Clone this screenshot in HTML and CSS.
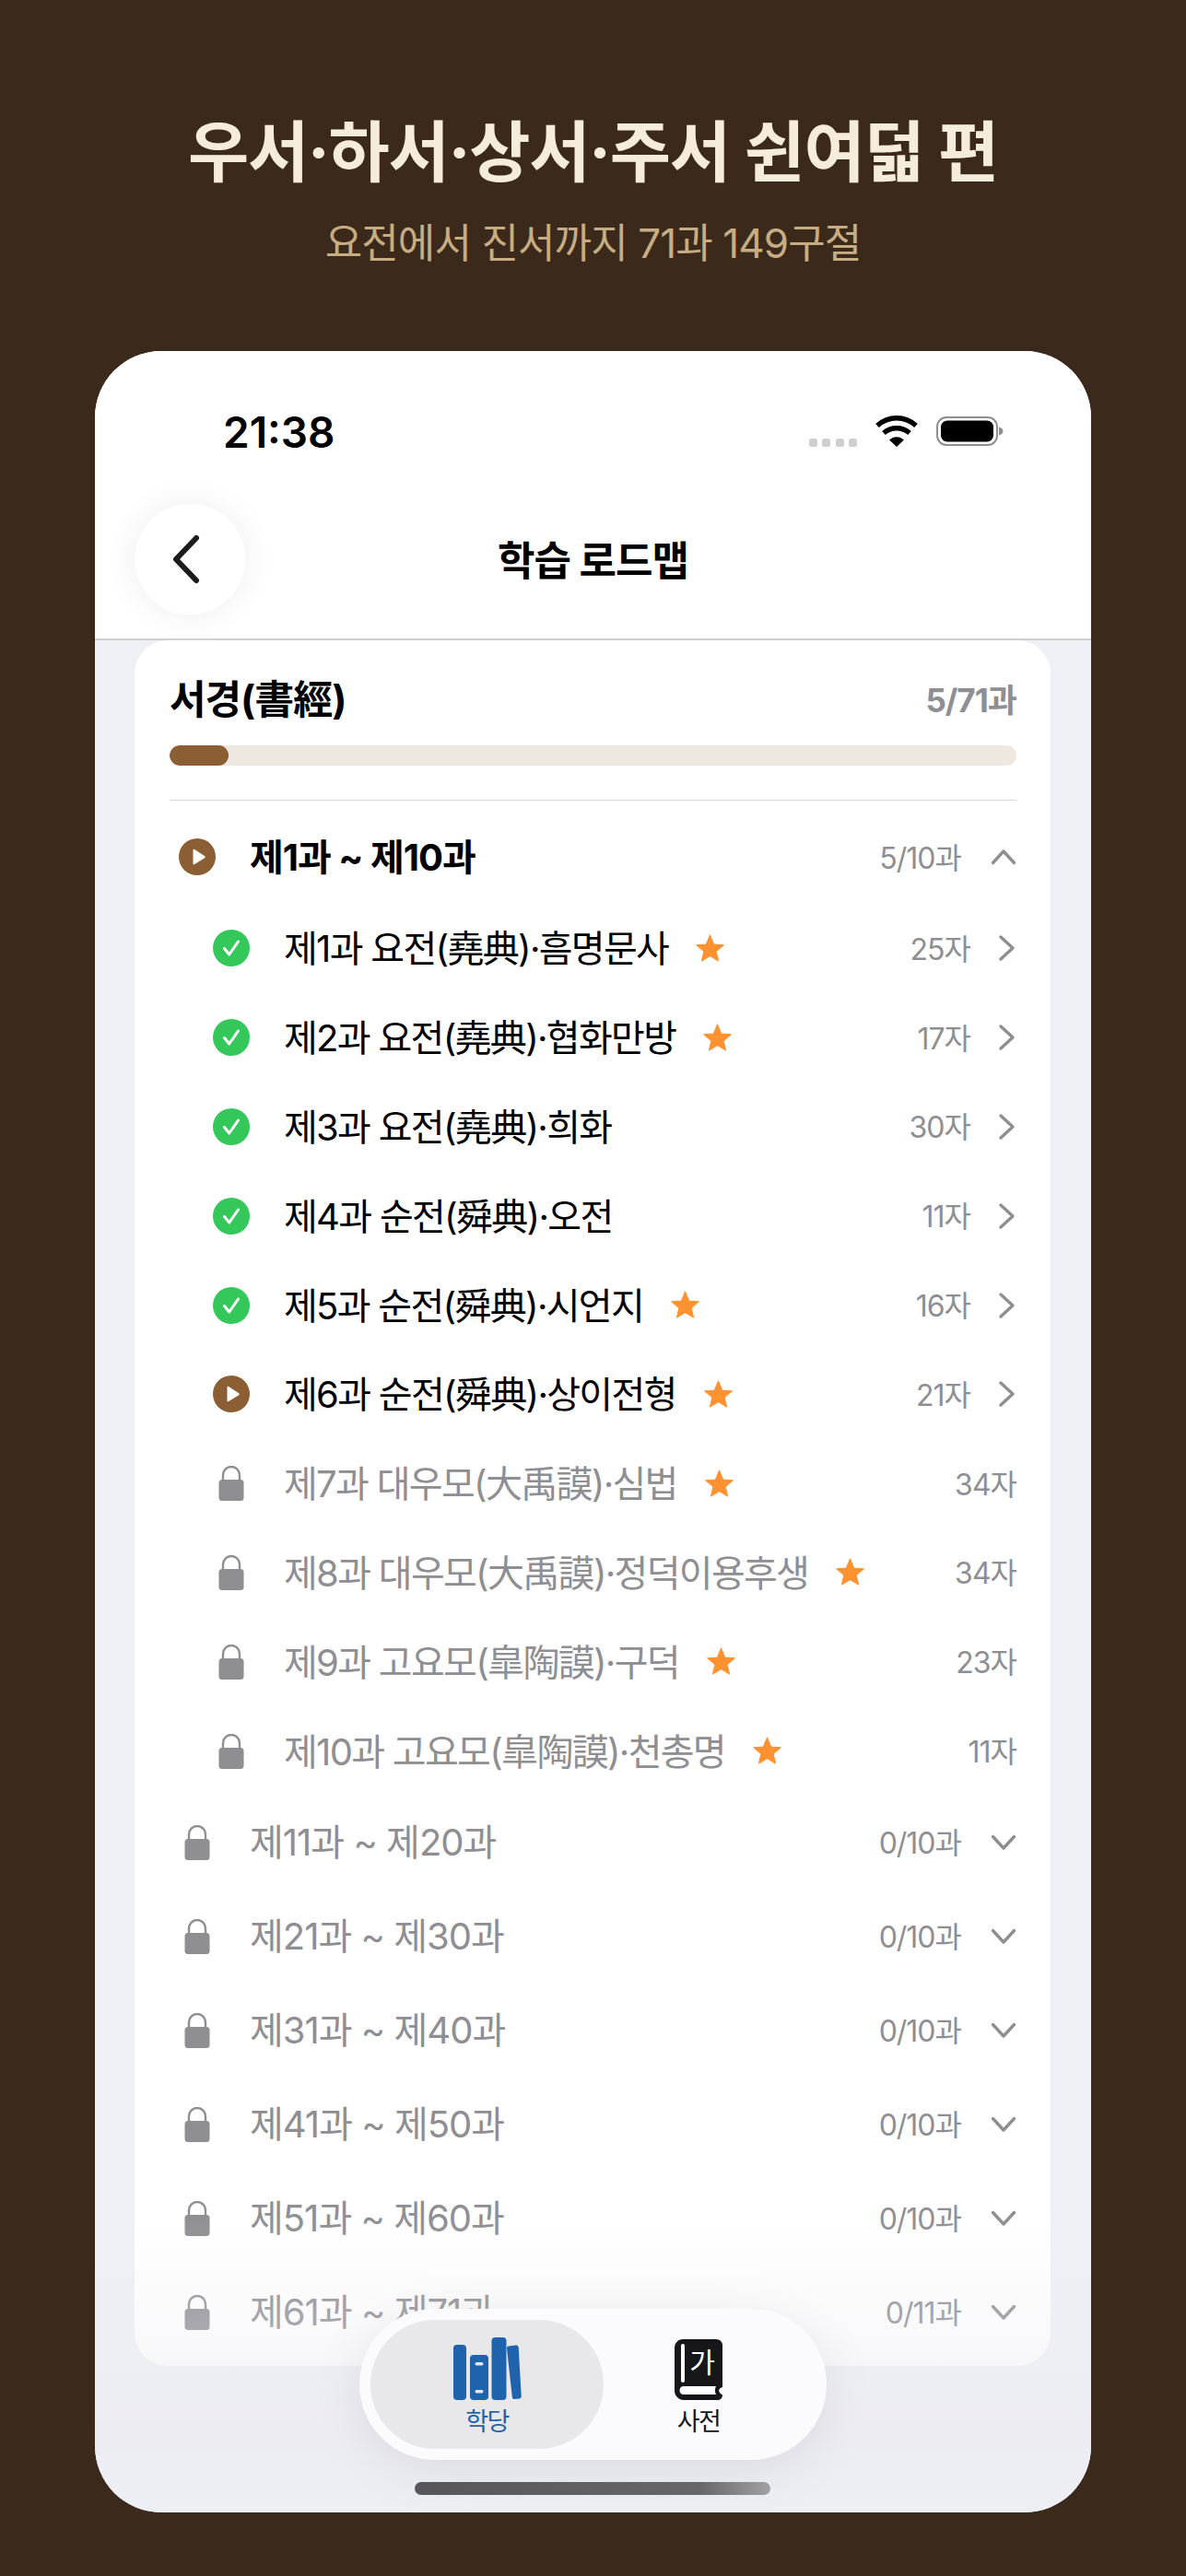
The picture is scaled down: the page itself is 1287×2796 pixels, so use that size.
FILE: index.html

```html
<!DOCTYPE html>
<html lang="ko">
<head>
    <meta charset="UTF-8">
    <meta name="viewport" content="width=device-width, initial-scale=1.0">
    <title>학습 로드맵</title>
    <link rel="stylesheet" href="styles.css">
</head>
<body>
    <!-- Iconos -->
    <svg class="sprite" aria-hidden="true">
        <symbol id="i-check" viewBox="0 0 40 40">
            <circle cx="20" cy="20" r="20" fill="#34C759"/>
            <path d="M12.5 20.5l5.2 6.5L27.5 13" fill="none" stroke="#fff" stroke-width="3" stroke-linecap="round" stroke-linejoin="round"/>
        </symbol>
        <symbol id="i-play" viewBox="0 0 40 40">
            <circle cx="20" cy="20" r="20" fill="#8B5E34"/>
            <path d="M15.5 12.8v14.4c0 .9.9 1.4 1.7.9l11-6.9c.7-.5.7-1.5 0-1.9l-11-7.3c-.8-.5-1.7.1-1.7.8z" fill="#fff"/>
        </symbol>
        <symbol id="i-lock" viewBox="0 0 28 38">
            <path d="M5 17v-7a9 9 0 0 1 18 0v7" fill="none" stroke="#8E8E93" stroke-width="2.400"/>
            <rect x="0.5" y="15" width="27" height="23" rx="3.500" fill="#8E8E93"/>
        </symbol>
        <symbol id="i-star" viewBox="0 0 30 30">
            <path d="M15 1l4 9.6 10.2.8-7.8 6.7 2.4 10L15 22.700l-8.800 5.400 2.400-10-7.800-6.700 10.200-.8z" fill="#FF9230" stroke="#FF9230" stroke-linejoin="round"/>
        </symbol>
        <symbol id="i-right" viewBox="0 0 20 30">
            <path d="M3 3l13 12L3 27" fill="none" stroke="#8E8E93" stroke-width="3.400" stroke-linecap="round" stroke-linejoin="round"/>
        </symbol>
        <symbol id="i-up" viewBox="0 0 28 18">
            <path d="M2.500 15.500L14 3l11.500 12.500" fill="none" stroke="#8E8E93" stroke-width="3.400" stroke-linecap="round" stroke-linejoin="round"/>
        </symbol>
        <symbol id="i-down" viewBox="0 0 28 18">
            <path d="M2.500 2.500L14 15 25.500 2.500" fill="none" stroke="#8E8E93" stroke-width="3.400" stroke-linecap="round" stroke-linejoin="round"/>
        </symbol>
    </svg>

    <!-- Encabezado -->
    <div class="promo">
        <h1>우서·하서·상서·주서 쉰여덟 편</h1>
        <p>요전에서 진서까지 71과 149구절</p>
    </div>

    <div class="phone">
        <div class="status-bar">
            <span class="time">21:38</span>
            <svg class="status-icons" width="212" height="36" viewBox="0 0 212 36">
                <rect x="0" y="25" width="9" height="9" rx="2.500" fill="#CFCFD2"/>
                <rect x="14" y="25" width="9" height="9" rx="2.500" fill="#CFCFD2"/>
                <rect x="29" y="25" width="9" height="9" rx="2.500" fill="#CFCFD2"/>
                <rect x="43" y="25" width="9" height="9" rx="2.500" fill="#CFCFD2"/>
                <path d="M74 11c12-11 30-11 42 0" fill="none" stroke="#000" stroke-width="5.500"/>
                <path d="M81 19c8-7 20-7 28 0" fill="none" stroke="#000" stroke-width="5.500"/>
                <path d="M87 26.500c5-4.500 11-4.500 16 0L95 34z" fill="#000"/>
                <rect x="139" y="2" width="65" height="30" rx="10" fill="#fff" stroke="#8E8E93" stroke-width="2"/>
                <rect x="143" y="5.500" width="57" height="23" rx="7" fill="#000"/>
                <path d="M206 12.500c3 .8 4.500 2.500 4.500 4.500s-1.500 3.700-4.500 4.500z" fill="#8E8E93"/>
            </svg>
        </div>

        <div class="nav-bar">
            <button class="back-btn" aria-label="뒤로">
                <svg width="34" height="54" viewBox="0 0 34 54"><path d="M28 4L6 27l22 23" fill="none" stroke="#1C1C1E" stroke-width="6" stroke-linecap="round" stroke-linejoin="round"/></svg>
            </button>
            <h2>학습 로드맵</h2>
        </div>

        <div class="card">
            <div class="card-head">
                <h3>서경(書經)</h3>
                <span class="card-count">5/71과</span>
            </div>
            <div class="progress"><div class="progress-fill" style="width: 7%"></div></div>
            <div class="divider"></div>

            <div class="group open">
                <svg class="group-icon"><use href="#i-play"/></svg>
                <span class="group-name">제1과 ~ 제10과</span>
                <span class="group-count">5/10과</span>
                <svg class="group-arrow"><use href="#i-up"/></svg>
            </div>

            <div class="lesson">
                <svg class="lesson-icon"><use href="#i-check"/></svg>
                <span class="lesson-name">제1과 요전(堯典)·흠명문사</span>
                <svg class="star"><use href="#i-star"/></svg>
                <span class="lesson-count">25자</span>
                <svg class="lesson-arrow"><use href="#i-right"/></svg>
            </div>
            <div class="lesson">
                <svg class="lesson-icon"><use href="#i-check"/></svg>
                <span class="lesson-name">제2과 요전(堯典)·협화만방</span>
                <svg class="star"><use href="#i-star"/></svg>
                <span class="lesson-count">17자</span>
                <svg class="lesson-arrow"><use href="#i-right"/></svg>
            </div>
            <div class="lesson">
                <svg class="lesson-icon"><use href="#i-check"/></svg>
                <span class="lesson-name">제3과 요전(堯典)·희화</span>
                <span class="lesson-count">30자</span>
                <svg class="lesson-arrow"><use href="#i-right"/></svg>
            </div>
            <div class="lesson">
                <svg class="lesson-icon"><use href="#i-check"/></svg>
                <span class="lesson-name">제4과 순전(舜典)·오전</span>
                <span class="lesson-count">11자</span>
                <svg class="lesson-arrow"><use href="#i-right"/></svg>
            </div>
            <div class="lesson">
                <svg class="lesson-icon"><use href="#i-check"/></svg>
                <span class="lesson-name">제5과 순전(舜典)·시언지</span>
                <svg class="star"><use href="#i-star"/></svg>
                <span class="lesson-count">16자</span>
                <svg class="lesson-arrow"><use href="#i-right"/></svg>
            </div>
            <div class="lesson">
                <svg class="lesson-icon"><use href="#i-play"/></svg>
                <span class="lesson-name">제6과 순전(舜典)·상이전형</span>
                <svg class="star"><use href="#i-star"/></svg>
                <span class="lesson-count">21자</span>
                <svg class="lesson-arrow"><use href="#i-right"/></svg>
            </div>
            <div class="lesson locked">
                <svg class="lesson-icon lock"><use href="#i-lock"/></svg>
                <span class="lesson-name">제7과 대우모(大禹謨)·심법</span>
                <svg class="star"><use href="#i-star"/></svg>
                <span class="lesson-count">34자</span>
            </div>
            <div class="lesson locked">
                <svg class="lesson-icon lock"><use href="#i-lock"/></svg>
                <span class="lesson-name">제8과 대우모(大禹謨)·정덕이용후생</span>
                <svg class="star"><use href="#i-star"/></svg>
                <span class="lesson-count">34자</span>
            </div>
            <div class="lesson locked">
                <svg class="lesson-icon lock"><use href="#i-lock"/></svg>
                <span class="lesson-name">제9과 고요모(皐陶謨)·구덕</span>
                <svg class="star"><use href="#i-star"/></svg>
                <span class="lesson-count">23자</span>
            </div>
            <div class="lesson locked">
                <svg class="lesson-icon lock"><use href="#i-lock"/></svg>
                <span class="lesson-name">제10과 고요모(皐陶謨)·천총명</span>
                <svg class="star"><use href="#i-star"/></svg>
                <span class="lesson-count">11자</span>
            </div>

            <div class="group locked">
                <svg class="group-icon lock"><use href="#i-lock"/></svg>
                <span class="group-name">제11과 ~ 제20과</span>
                <span class="group-count">0/10과</span>
                <svg class="group-arrow"><use href="#i-down"/></svg>
            </div>
            <div class="group locked">
                <svg class="group-icon lock"><use href="#i-lock"/></svg>
                <span class="group-name">제21과 ~ 제30과</span>
                <span class="group-count">0/10과</span>
                <svg class="group-arrow"><use href="#i-down"/></svg>
            </div>
            <div class="group locked">
                <svg class="group-icon lock"><use href="#i-lock"/></svg>
                <span class="group-name">제31과 ~ 제40과</span>
                <span class="group-count">0/10과</span>
                <svg class="group-arrow"><use href="#i-down"/></svg>
            </div>
            <div class="group locked">
                <svg class="group-icon lock"><use href="#i-lock"/></svg>
                <span class="group-name">제41과 ~ 제50과</span>
                <span class="group-count">0/10과</span>
                <svg class="group-arrow"><use href="#i-down"/></svg>
            </div>
            <div class="group locked">
                <svg class="group-icon lock"><use href="#i-lock"/></svg>
                <span class="group-name">제51과 ~ 제60과</span>
                <span class="group-count">0/10과</span>
                <svg class="group-arrow"><use href="#i-down"/></svg>
            </div>
            <div class="group locked">
                <svg class="group-icon lock"><use href="#i-lock"/></svg>
                <span class="group-name">제61과 ~ 제71과</span>
                <span class="group-count">0/11과</span>
                <svg class="group-arrow"><use href="#i-down"/></svg>
            </div>
        </div>

        <!-- Lo que queda encima de la lista -->
        <div class="bottom-fade"></div>

        <div class="tab-bar">
            <div class="tab active">
                <svg width="74" height="68" viewBox="0 0 74 68">
                    <rect x="0" y="8" width="14" height="60" rx="4" fill="#1F63AD"/>
                    <rect x="18" y="19" width="20" height="49" rx="4" fill="#1F63AD"/>
                    <rect x="23.500" y="27" width="9" height="3.500" rx="1.700" fill="#E8E8EA"/>
                    <rect x="23.500" y="57" width="9" height="3.500" rx="1.700" fill="#E8E8EA"/>
                    <rect x="41.500" y="0" width="16" height="68" rx="4" fill="#1F63AD"/>
                    <path d="M60 9.500l8-1c1.500-.2 2.500.8 2.700 2.300l3 53c.1 1.500-.7 2.500-2.200 2.700l-5 .6c-1.500.1-2.500-.8-2.700-2.300L58 12c-.1-1.400.6-2.300 2-2.500z" fill="#1F63AD"/>
                </svg>
                <span>학당</span>
            </div>
            <div class="tab">
                <svg class="book-icon" width="52" height="66" viewBox="0 0 52 66">
                    <path d="M9 0h36c3.900 0 7 2.500 7 6.500V52c-3 1-4.500 2.800-3.500 5 .6 1.500 2 2.500 3.500 3.500 0 3-2 5.500-5 5.500H10C4.500 66 0 61.500 0 56V9C0 4 4 0 9 0z" fill="#17171A"/>
                    <rect x="7" y="5" width="4" height="42" rx="2" fill="#fff"/>
                    <path d="M10 51h35c-1.500 3-1.500 6 0 9H10c-2.800 0-4.500-2-4.500-4.500S7.200 51 10 51z" fill="#fff"/>
                    <text class="book-char" x="30" y="36" text-anchor="middle">가</text>
                </svg>
                <span>사전</span>
            </div>
        </div>

        <div class="home-bar"></div>
    </div>
</body>
</html>
```

FILE: styles.css

```css
/* Estructura general */
body {
    margin: 0;
    height: 2796px;
    overflow: hidden;
    background-color: #3B2A1C;
    font-family: Inter, "Noto Sans CJK KR", sans-serif;
}

.sprite {
    display: none;
}

.promo {
    height: 381px;
    box-sizing: border-box;
    padding-top: 120px;
    text-align: center;
}

.promo h1 {
    margin: 0;
    font-size: 72px;
    line-height: 90px;
    font-weight: 700;
    letter-spacing: -1.300px;
    color: #F5ECDD;
}

.promo p {
    margin: 29px 0 0;
    font-size: 44px;
    line-height: 50px;
    font-weight: 400;
    letter-spacing: -0.900px;
    color: #C8AC82;
}

.phone {
    position: relative;
    width: 1081px;
    height: 2346px;
    margin: 0 103px;
    border-radius: 72px;
    overflow: hidden;
    background-color: #EFEFF6;
}

/* Barra de estado */
.status-bar {
    display: flex;
    align-items: center;
    justify-content: space-between;
    height: 56px;
    padding: 60px 94px 0 139px;
    background-color: white;
}

.time {
    font-size: 46px;
    line-height: 56px;
    font-weight: 600;
    color: black;
}

/* Barra de navegacion */
.nav-bar {
    display: grid;
    grid-template-columns: 120px 1fr 120px;
    align-items: center;
    padding: 50px 43px 26px;
    background-color: white;
    border-bottom: 2px solid #CFCFD3;
    margin-bottom: -2px;
    position: relative;
}

.back-btn {
    display: flex;
    align-items: center;
    justify-content: center;
    width: 120px;
    height: 120px;
    padding: 0 8px 0 0;
    border: none;
    border-radius: 50%;
    background-color: white;
    box-shadow: 0 0 36px rgba(0, 0, 0, 0.07);
}

.nav-bar h2 {
    margin: 0 0 3px;
    text-align: center;
    font-size: 44px;
    font-weight: 700;
    letter-spacing: -1px;
    color: black;
}

/* Tarjeta */
.card {
    position: relative;
    width: 994px;
    box-sizing: border-box;
    margin: 2px 0 0 43px;
    padding: 40px 37px 7px 38px;
    border-radius: 36px;
    background-color: white;
}

.card-head {
    display: flex;
    align-items: center;
    justify-content: space-between;
    height: 50px;
}

.card-head h3 {
    margin: 0 0 8px;
    font-size: 43px;
    font-weight: 700;
    letter-spacing: -1px;
    color: black;
}

.card-count {
    margin-bottom: 5px;
    font-size: 35px;
    font-weight: 700;
    letter-spacing: -1px;
    color: #8E8E93;
}

.progress {
    height: 22px;
    margin-top: 24px;
    border-radius: 11px;
    background-color: #EFE8E0;
    overflow: hidden;
}

.progress-fill {
    height: 100%;
    border-radius: 11px;
    background-color: #8B5E34;
}

.divider {
    height: 1px;
    margin: 37px 0 10px;
    background-color: #D9D9DC;
}

/* Filas */
.group,
.lesson {
    display: flex;
    align-items: center;
    color: black;
}

.group {
    height: 102px;
    padding-left: 10px;
}

.lesson {
    height: 96.800px;
    padding-left: 47px;
}

.group-icon,
.lesson-icon {
    flex: none;
    width: 40px;
    height: 40px;
}

.group-icon.lock,
.lesson-icon.lock {
    width: 28px;
    height: 38px;
    margin: 0 6px;
}

.group-name {
    margin-left: 37px;
    padding-bottom: 5px;
    font-size: 40px;
    letter-spacing: -1px;
}

.group.open .group-name {
    font-weight: 700;
}

.lesson-name {
    margin-left: 37px;
    padding-bottom: 4px;
    font-size: 40px;
    letter-spacing: -1.700px;
}

.locked {
    color: #8E8E93;
}

.star {
    flex: none;
    width: 31px;
    height: 31px;
    margin-left: 30px;
}

.group-count,
.lesson-count {
    margin-left: auto;
    padding-bottom: 3px;
    font-size: 32px;
    letter-spacing: -1px;
    color: #8E8E93;
}

.group-arrow {
    flex: none;
    width: 28px;
    height: 18px;
    margin-left: 32px;
}

.lesson-arrow {
    flex: none;
    width: 20px;
    height: 30px;
    margin-left: 30px;
}

/* Parte inferior */
.bottom-fade {
    position: absolute;
    left: 0;
    right: 0;
    top: 2020px;
    bottom: 0;
    background: linear-gradient(rgba(236, 236, 242, 0), rgba(236, 236, 242, 0.2) 30%, rgba(236, 236, 242, 0.42) 52%, rgba(236, 236, 242, 0.85) 75%, #EEEEF5);
}

.tab-bar {
    position: absolute;
    left: 287px;
    top: 2125px;
    display: grid;
    grid-template-columns: 253px 206px;
    width: 507px;
    height: 164px;
    box-sizing: border-box;
    padding: 12px;
    border-radius: 82px;
    background-color: #FBFBFD;
    box-shadow: 0 10px 60px rgba(0, 0, 0, 0.08);
}

.tab {
    display: flex;
    flex-direction: column;
    align-items: center;
    padding-top: 19px;
    border-radius: 70px;
    font-size: 27px;
    color: #17171A;
}

.tab span {
    margin-top: 5px;
    line-height: 38px;
    letter-spacing: -1.500px;
}

.tab.active {
    background-color: #E8E8EA;
    color: #1F63AD;
}

.book-icon {
    margin-top: 2px;
}

.book-char {
    font-size: 30px;
    fill: white;
}

.home-bar {
    position: absolute;
    left: 347px;
    top: 2313px;
    width: 386px;
    height: 14px;
    border-radius: 7px;
    background: linear-gradient(90deg, #55555A, #66666B 80%, #A0A0A5);
}
```
